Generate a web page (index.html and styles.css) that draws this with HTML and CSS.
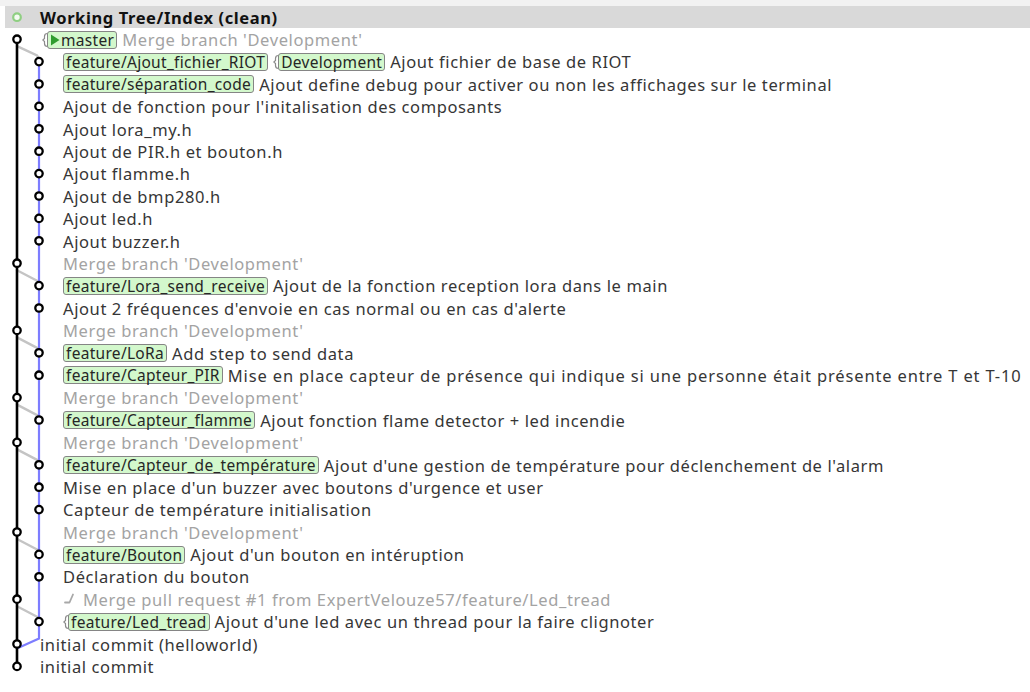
FILE: index.html
```html
<!DOCTYPE html>
<html lang="fr">
<head>
<meta charset="utf-8">
<title>Log</title>
<link rel="stylesheet" href="styles.css">
</head>
<body>
<div class="view">
  <div class="wt-row">
    <svg class="wt-node" width="35" height="22.4" viewBox="0 0 35 22.4"><circle cx="12" cy="11.2" r="3.8" fill="#f4fbf2" stroke="#8fcf82" stroke-width="2.2"/></svg>
    <span class="wt-text">Working Tree/Index (clean)</span>
  </div>
  <div class="log">
    <svg class="graph" width="62" height="649.6" viewBox="0 0 62 649.6">
      <g stroke="#c4c4c4" stroke-width="2.4" fill="none" stroke-linecap="round">
        <path d="M17,18.2 L37,27.5 L39,31"/>
        <path d="M17,242.2 L38,253.2"/>
        <path d="M17,309.4 L38,320.4"/>
        <path d="M17,376.6 L38,387.6"/>
        <path d="M17,421.4 L38,432.4"/>
        <path d="M17,511 L38,522"/>
        <path d="M17,578.2 L38,589.2"/>
      </g>
      <path d="M39,33.6 V610.6 L18,620" stroke="#7d7dff" stroke-width="2.2" fill="none"/>
      <path d="M17,11.2 V638.4" stroke="#000" stroke-width="2.6" fill="none"/>
      <g fill="#fff" stroke="#000" stroke-width="2.3">
        <circle cx="17" cy="11.2" r="3.7"/>
        <circle cx="17" cy="235.2" r="3.7"/>
        <circle cx="17" cy="302.4" r="3.7"/>
        <circle cx="17" cy="369.6" r="3.7"/>
        <circle cx="17" cy="414.4" r="3.7"/>
        <circle cx="17" cy="504" r="3.7"/>
        <circle cx="17" cy="571.2" r="3.7"/>
        <circle cx="17" cy="616" r="3.7"/>
        <circle cx="17" cy="638.4" r="3.7"/>
        <circle cx="39" cy="33.6" r="3.7"/>
        <circle cx="39" cy="56" r="3.7"/>
        <circle cx="39" cy="78.4" r="3.7"/>
        <circle cx="39" cy="100.8" r="3.7"/>
        <circle cx="39" cy="123.2" r="3.7"/>
        <circle cx="39" cy="145.6" r="3.7"/>
        <circle cx="39" cy="168" r="3.7"/>
        <circle cx="39" cy="190.4" r="3.7"/>
        <circle cx="39" cy="212.8" r="3.7"/>
        <circle cx="39" cy="257.6" r="3.7"/>
        <circle cx="39" cy="280" r="3.7"/>
        <circle cx="39" cy="324.8" r="3.7"/>
        <circle cx="39" cy="347.2" r="3.7"/>
        <circle cx="39" cy="392" r="3.7"/>
        <circle cx="39" cy="436.8" r="3.7"/>
        <circle cx="39" cy="459.2" r="3.7"/>
        <circle cx="39" cy="481.6" r="3.7"/>
        <circle cx="39" cy="526.4" r="3.7"/>
        <circle cx="39" cy="548.8" r="3.7"/>
        <circle cx="39" cy="593.6" r="3.7"/>
      </g>
    </svg>
    <ul class="rows">
      <li class="row head"><svg class="notch" width="6" height="16" viewBox="0 0 6 16"><path d="M5.5,1.5 Q2.5,1.5 2.5,4.5 V6.5 L0.8,8 L2.5,9.5 V11.5 Q2.5,14.5 5.5,14.5" fill="none" stroke="#8a8a8a" stroke-width="1.2"/></svg><span class="ref"><svg class="tri" width="10" height="12" viewBox="0 0 10 12"><path d="M1,0.5 L9.5,6 L1,11.5 Z" fill="#2f9c2f"/></svg>master</span><span class="msg merge">Merge branch 'Development'</span></li>
      <li class="row"><span class="ref">feature/Ajout_fichier_RIOT</span><svg class="notch" width="6" height="16" viewBox="0 0 6 16"><path d="M5.5,1.5 Q2.5,1.5 2.5,4.5 V6.5 L0.8,8 L2.5,9.5 V11.5 Q2.5,14.5 5.5,14.5" fill="none" stroke="#8a8a8a" stroke-width="1.2"/></svg><span class="ref">Development</span><span class="msg">Ajout fichier de base de RIOT</span></li>
      <li class="row"><span class="ref">feature/séparation_code</span><span class="msg">Ajout define debug pour activer ou non les affichages sur le terminal</span></li>
      <li class="row"><span class="msg">Ajout de fonction pour l'initalisation des composants</span></li>
      <li class="row"><span class="msg">Ajout lora_my.h</span></li>
      <li class="row"><span class="msg">Ajout de PIR.h et bouton.h</span></li>
      <li class="row"><span class="msg">Ajout flamme.h</span></li>
      <li class="row"><span class="msg">Ajout de bmp280.h</span></li>
      <li class="row"><span class="msg">Ajout led.h</span></li>
      <li class="row"><span class="msg">Ajout buzzer.h</span></li>
      <li class="row"><span class="msg merge">Merge branch 'Development'</span></li>
      <li class="row"><span class="ref">feature/Lora_send_receive</span><span class="msg">Ajout de la fonction reception lora dans le main</span></li>
      <li class="row"><span class="msg">Ajout 2 fréquences d'envoie en cas normal ou en cas d'alerte</span></li>
      <li class="row"><span class="msg merge">Merge branch 'Development'</span></li>
      <li class="row"><span class="ref">feature/LoRa</span><span class="msg">Add step to send data</span></li>
      <li class="row"><span class="ref">feature/Capteur_PIR</span><span class="msg wide">Mise en place capteur de présence qui indique si une personne était présente entre T et T-10</span></li>
      <li class="row"><span class="msg merge">Merge branch 'Development'</span></li>
      <li class="row"><span class="ref">feature/Capteur_flamme</span><span class="msg">Ajout fonction flame detector + led incendie</span></li>
      <li class="row"><span class="msg merge">Merge branch 'Development'</span></li>
      <li class="row"><span class="ref">feature/Capteur_de_température</span><span class="msg">Ajout d'une gestion de température pour déclenchement de l'alarm</span></li>
      <li class="row"><span class="msg">Mise en place d'un buzzer avec boutons d'urgence et user</span></li>
      <li class="row"><span class="msg">Capteur de température initialisation</span></li>
      <li class="row"><span class="msg merge">Merge branch 'Development'</span></li>
      <li class="row"><span class="ref">feature/Bouton</span><span class="msg">Ajout d'un bouton en intéruption</span></li>
      <li class="row"><span class="msg">Déclaration du bouton</span></li>
      <li class="row"><svg class="hook" width="16" height="14" viewBox="0 0 16 14"><path d="M2,10.5 H6.5 L10,2.5" fill="none" stroke="#a8a8a8" stroke-width="1.8" stroke-linecap="round" stroke-linejoin="round"/></svg><span class="msg merge">Merge pull request #1 from ExpertVelouze57/feature/Led_tread</span></li>
      <li class="row"><svg class="notch" width="6" height="16" viewBox="0 0 6 16"><path d="M5.5,1.5 Q2.5,1.5 2.5,4.5 V6.5 L0.8,8 L2.5,9.5 V11.5 Q2.5,14.5 5.5,14.5" fill="none" stroke="#8a8a8a" stroke-width="1.2"/></svg><span class="ref">feature/Led_tread</span><span class="msg">Ajout d'une led avec un thread pour la faire clignoter</span></li>
      <li class="row l1"><span class="msg">initial commit (helloworld)</span></li>
      <li class="row l1"><span class="msg">initial commit</span></li>
    </ul>
  </div>
</div>
</body>
</html>
```

FILE: styles.css
```css
html, body {
  margin: 0;
  padding: 0;
  background: #ffffff;
}

body {
  font-family: "Noto Sans", "DejaVu Sans", sans-serif;
  font-size: 16.5px;
  color: #363636;
  width: 1030px;
  height: 692px;
  overflow: hidden;
}

.view {
  border-top: 6px solid #f2f2f2;
}

.wt-row {
  margin-left: 5px;
  height: 22.4px;
  background: #d9d9d9;
  display: flex;
  align-items: center;
}

.wt-node {
  display: block;
  flex: none;
}

.wt-text {
  font-weight: bold;
  color: #111111;
  white-space: nowrap;
  letter-spacing: 0.6px;
}

.log {
  display: grid;
  grid-template-columns: 62px 1fr;
}

.graph {
  grid-area: 1 / 1 / 2 / 2;
  display: block;
  z-index: 1;
}

.rows {
  grid-area: 1 / 1 / 2 / 3;
  list-style: none;
  margin: 0;
  padding: 0;
}

.row {
  height: 22.4px;
  display: flex;
  align-items: center;
  padding-left: 63px;
  white-space: nowrap;
}

.row.l1 {
  padding-left: 40px;
}

.row.head {
  padding-left: 42px;
}

.ref {
  display: inline-flex;
  align-items: center;
  height: 16px;
  padding: 0 2px;
  border: 1px solid #858585;
  border-radius: 3px;
  background: #d3f8cc;
  color: #262626;
  font-size: 15.5px;
  letter-spacing: 0.3px;
  line-height: 16px;
  margin-right: 5px;
}

.notch {
  display: block;
  flex: none;
  margin-right: -1px;
}

.tri {
  display: block;
  margin: 0 1px 0 0;
}

.msg {
  color: #363636;
  letter-spacing: 0.6px;
}

.msg.wide {
  letter-spacing: 0.85px;
}

.msg.merge {
  color: #a3a3a3;
}

.hook {
  display: block;
  flex: none;
  margin-right: 4px;
}
```
